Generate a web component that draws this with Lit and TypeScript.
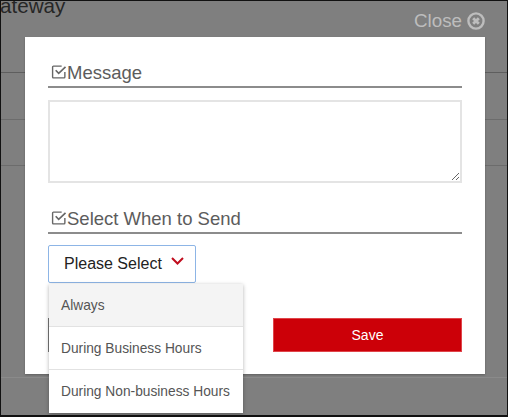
import { LitElement, html, css } from "lit";
import { customElement } from "lit/decorators.js";

const checkIcon = html`<svg class="chk" viewBox="0 0 15 14" width="16" height="15" fill="none">
  <path d="M13 7.5V12.2a.8.8 0 0 1-.8.8H2.3a.8.8 0 0 1-.8-.8V2.8a.8.8 0 0 1 .8-.8H10" stroke="#666" stroke-width="1.3"/>
  <path d="M4.4 5.8 7.2 8.8 13.6 2.6" stroke="#666" stroke-width="1.5"/>
</svg>`;

@customElement("app-root")
export class AppRoot extends LitElement {
  static styles = css`
    :host { display: block; width: 508px; height: 417px; font-family: "Liberation Sans", Arial, sans-serif; }
    .page { position: relative; box-sizing: border-box; width: 508px; height: 417px; overflow: hidden; background: #7f7f7f;
      border: solid #111; border-width: 1px 1px 2px 1px; }
    .backdrop { display: flex; flex-direction: column; }
    .title { height: 77px; box-sizing: border-box; margin-top: -5px; font-size: 20.6px; line-height: 20px; color: #262626; border-bottom: 1px solid #5e5e5e; margin-left: -1px; flex: none; }
    .brow { height: 47px; box-sizing: border-box; border-bottom: 1px solid #6c6c6c; flex: none; }
    .brow.short { height: 46px; }
    .brow.tall { height: 212px; border-bottom-color: #8a8a8a; }
    .close { position: absolute; top: 10px; right: 22px; display: flex; align-items: center; gap: 5px; font-size: 18.8px; line-height: 20px; color: #bdbdbd; }
    .modal { position: absolute; left: 24px; top: 36px; width: 460px; height: 337px; box-sizing: border-box; background: #fff; padding: 26px 23px 0 23px; display: flex; flex-direction: column; box-shadow: 0 1px 2px rgba(0,0,0,.25); }
    .head { display: flex; align-items: center; height: 25px; box-sizing: border-box; border-bottom: 2px solid #8c8c8c; font-size: 18.5px; line-height: 22px; color: #5c5c5c; padding: 0 0 3px 3px; gap: 0; }
    .chk { flex: none; margin-top: -4px; }
    .area { display: block; box-sizing: border-box; width: 414px; height: 83px; margin-top: 12px; border: 2px solid #e4e4e4; background: #fff; resize: vertical; outline: none; padding: 0; }
    .head.second { margin-top: 26px; }
    .select { position: relative; margin-top: 11px; box-sizing: border-box; width: 148px; height: 38px; border: 1.5px solid #8db5e6; border-radius: 2px; display: flex; align-items: center; padding-left: 15px; font-size: 16px; color: #222; gap: 9px; }
    .chev { flex: none; margin-top: -6px; }
    .actions { display: flex; justify-content: space-between; margin-top: 35px; align-items: stretch; }
    .ghost { width: 100px; height: 34px; box-sizing: border-box; border-left: 2px solid #777; background: #fff; }
    .save { width: 189px; height: 34px; box-sizing: border-box; background: #cc0008; border: 1px solid #e0444a; color: #fff; font: 14px "Liberation Sans", Arial, sans-serif; font-weight: 400; padding: 0; }
    .menu { position: absolute; left: 24px; top: 247px; width: 194px; background: #fff; box-shadow: 0 1px 4px rgba(0,0,0,.3); font-size: 13.75px; color: #555; display: flex; flex-direction: column; }
    .opt { height: 43px; box-sizing: border-box; display: flex; align-items: center; padding-left: 12px; border-bottom: 1.5px solid #e2e2e2; }
    .opt:last-child { border-bottom: none; height: 43px; }
    .opt.active { background: #f4f4f4; }
  `;

  render() {
    return html`<div class="page">
      <div class="backdrop">
        <div class="title">ateway</div>
        <div class="brow"></div>
        <div class="brow short"></div>
        <div class="brow tall"></div>
      </div>
      <div class="close">Close
        <svg width="18" height="18" viewBox="0 0 18 18" fill="none">
          <circle cx="9" cy="9" r="7.6" stroke="#bdbdbd" stroke-width="2.4"/>
          <path d="M6.2 6.2 11.8 11.8M11.8 6.2 6.2 11.8" stroke="#bdbdbd" stroke-width="2.8"/>
        </svg>
      </div>
      <div class="modal">
        <div class="head">${checkIcon}<span>Message</span></div>
        <textarea class="area"></textarea>
        <div class="head second">${checkIcon}<span>Select When to Send</span></div>
        <div class="select">Please Select
          <svg class="chev" width="13" height="8" viewBox="0 0 13 8" fill="none">
            <path d="M1 1 6.5 6.5 12 1" stroke="#c00d1e" stroke-width="2"/>
          </svg>
        </div>
        <div class="actions">
          <div class="ghost"></div>
          <button class="save">Save</button>
        </div>
        <div class="menu">
          <div class="opt active">Always</div>
          <div class="opt">During Business Hours</div>
          <div class="opt">During Non-business Hours</div>
        </div>
      </div>
    </div>`;
  }
}
